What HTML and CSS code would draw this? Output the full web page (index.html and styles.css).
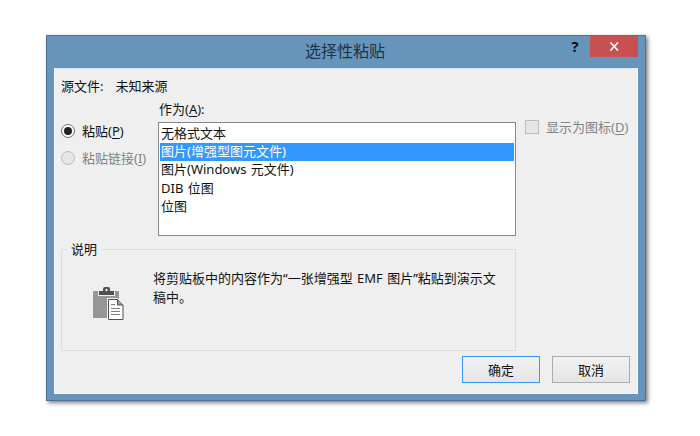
FILE: index.html
```html
<!DOCTYPE html>
<html lang="zh-CN">
<head>
  <meta charset="UTF-8" />
  <meta name="viewport" content="width=device-width, initial-scale=1.0"/>
  <title>选择性粘贴</title>
  <link rel="stylesheet" href="styles.css">
</head>
<body>
  <div class="dialog">
    <div class="titlebar">
      <div class="title">选择性粘贴</div>
      <div class="help">?</div>
      <div class="close">
        <svg width="10" height="9" viewBox="0 0 10 9"><path d="M1.500 .5l7.500 8M9 .5l-7.500 8" stroke="#fff" stroke-width="1.7"/></svg>
      </div>
    </div>

    <div class="client">
      <div class="source"><span>源文件:</span><span>未知来源</span></div>

      <div class="main">
        <div class="modes">
          <label class="radio checked"><i></i>粘贴(<u>P</u>)</label>
          <label class="radio disabled"><i></i>粘贴链接(<u>I</u>)</label>
        </div>
        <div class="formats">
          <div class="formats-label">作为(<u>A</u>):</div>
          <ul class="list">
            <li>无格式文本</li>
            <li class="selected">图片(增强型图元文件)</li>
            <li>图片(Windows 元文件)</li>
            <li>DIB 位图</li>
            <li>位图</li>
          </ul>
        </div>
        <label class="check"><i></i>显示为图标(<u>D</u>)</label>
      </div>

      <fieldset class="group">
        <legend>说明</legend>
        <svg class="clipboard" width="32" height="34" viewBox="0 0 32 34">
          <path d="M2 4h24q1 0 1 1v25q0 1-1 1H2q-1 0-1-1V5q0-1 1-1z" fill="#969696"/>
          <path d="M6 3h17v6H6z" fill="#efefef"/>
          <path d="M7 4h4V2q0-2 2-2h3q2 0 2 2v2h4v4H7z" fill="#505050"/>
          <circle cx="14.5" cy="3" r="1.2" fill="#efefef"/>
          <path d="M15 11h10.500l6.500 6.500V34H15z" fill="#efefef"/>
          <path d="M16.500 12.500h9l5.500 5.500v14.500h-14.500z" fill="#fff" stroke="#505050"/>
          <path d="M25.500 12.500V18h5.500" fill="#a0a0a0" stroke="#505050"/>
          <path d="M19 17.500h4M19 21.500h9M19 24.500h9M19 27.500h9" stroke="#808080"/>
        </svg>
        <p>将剪贴板中的内容作为“一张增强型 EMF 图片”粘贴到演示文<br>稿中。</p>
      </fieldset>

      <div class="buttons">
        <button class="default">确定</button>
        <button>取消</button>
      </div>
    </div>
  </div>
</body>
</html>
```
FILE: styles.css
```css
* {
  box-sizing: border-box;
}
body {
  margin: 0;
  padding: 35px 0 0 46px;
  height: 436px;
  overflow: hidden;
  background: #fff;
  color: #111;
  font: 13px/18px "Noto Sans", "Noto Sans CJK SC", sans-serif;
  word-spacing: 1px;
}
.dialog {
  width: 600px;
  height: 366px;
  padding: 0 7px 7px;
  background: #6794bb;
  border: 1px solid #4b7193;
  box-shadow: 2px 2px 4px rgba(0, 0, 0, 0.5);
}
.titlebar {
  display: flex;
  height: 32px;
}
.title {
  flex: 1;
  padding-left: 76px;
  text-align: center;
  font-size: 16px;
  line-height: 31px;
  color: #1d3345;
}
.help {
  width: 30px;
  text-align: center;
  font: bold 15px/20px "Open Sans", sans-serif;
  color: #111;
}
.close {
  display: flex;
  align-items: center;
  justify-content: center;
  width: 48px;
  height: 21px;
  background: #c75050;
}
.client {
  height: 326px;
  padding: 8px 7px 0;
  background: #efefef;
  border: 1px solid #f8fbfd;
  border-top-color: #dceaf5;
}
.source {
  display: flex;
  gap: 12px;
  height: 19px;
  margin-left: -1px;
}
u {
  text-underline-offset: 2px;
}
.main {
  display: flex;
  height: 140px;
}
.modes {
  width: 96px;
  padding-top: 26px;
}
.radio {
  display: flex;
  align-items: center;
  height: 18px;
  margin-bottom: 9px;
  white-space: nowrap;
}
.radio i {
  display: flex;
  align-items: center;
  justify-content: center;
  width: 14px;
  height: 14px;
  margin: 0 7px 0 -1px;
  background: #fff;
  border: 1px solid #707070;
  border-radius: 50%;
}
.radio.checked i::before {
  content: "";
  width: 8px;
  height: 8px;
  border-radius: 50%;
  background: #222;
}
.disabled,
.check {
  color: #838383;
}
.radio.disabled i,
.check i {
  background: #e6e6e6;
  border: 1px solid #bcbcbc;
}
.formats {
  width: 358px;
}
.formats-label {
  height: 26px;
  padding: 4px 0 0 1px;
}
.list {
  height: 114px;
  margin: 0;
  padding: 2px 1px;
  list-style: none;
  background: #fff;
  border: 1px solid #828790;
}
.list li {
  height: 18.2px;
  padding-left: 1px;
  line-height: 17px;
}
.list .selected {
  background: #3399ff;
  color: #fff;
}
.check {
  display: flex;
  align-items: center;
  height: 18px;
  margin: 22px 0 0 9px;
  white-space: nowrap;
}
.check i {
  width: 14px;
  height: 14px;
  margin-right: 7px;
}
.group {
  display: flex;
  width: 455px;
  height: 111px;
  margin: 4px 0 0 -1px;
  padding: 0;
  border: 1px solid #dcdcdc;
}
.group legend {
  margin-left: 5px;
  padding: 0 4px;
}
.clipboard {
  flex: none;
  margin: 29px 0 0 30px;
}
.group p {
  margin: 11px 0 0 29px;
  line-height: 19px;
  white-space: nowrap;
}
.buttons {
  display: flex;
  justify-content: flex-end;
  gap: 12px;
  margin-top: 5px;
}
button {
  width: 78px;
  height: 27px;
  padding: 0;
  font: inherit;
  color: #111;
  background: linear-gradient(#f1f1f1, #e5e5e5);
  border: 1px solid #acacac;
}
button.default {
  border-color: #3399ff;
}
```
